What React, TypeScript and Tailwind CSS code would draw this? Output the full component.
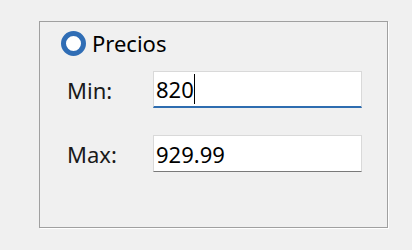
import React from "react";

export default function App() {
  const font = { fontFamily: '"Noto Sans", "Open Sans", sans-serif' };
  return (
    <div className="w-[412px] h-[250px] bg-[#f0f0f0] overflow-hidden pt-[21px] pl-[39px]" style={font}>
      <div className="w-[349px] h-[207px] border border-[#a0a0a0] shadow-[1px_1px_0_#ffffff] relative">
        <div className="flex items-center mt-[8px] ml-[21px] h-[26px]">
          <div className="w-[25px] h-[25px] rounded-full border-[5px] border-[#2f6db5] bg-white box-border" />
          <span className="ml-[6px] text-[22px] leading-none text-black">Precios</span>
        </div>
        <div className="flex flex-col gap-[27px] mt-[15px]">
          <div className="flex items-center">
            <span className="w-[86px] ml-[27px] text-[22px] text-[#1a1a1a] leading-none">Min:</span>
            <div className="w-[209px] h-[37px] bg-white border border-[#d9d9d9] border-b-2 border-b-[#2e6db0] flex items-center pl-[2px]">
              <span className="text-[22px] leading-none text-black">820</span>
              <span className="w-[1px] h-[30px] bg-black" />
            </div>
          </div>
          <div className="flex items-center">
            <span className="w-[86px] ml-[27px] text-[22px] text-[#1a1a1a] leading-none">Max:</span>
            <div className="w-[209px] h-[37px] bg-white border border-[#d9d9d9] border-b-[#7a7a7a] flex items-center pl-[2px]">
              <span className="text-[22px] leading-none text-black">929.99</span>
            </div>
          </div>
        </div>
      </div>
    </div>
  );
}
